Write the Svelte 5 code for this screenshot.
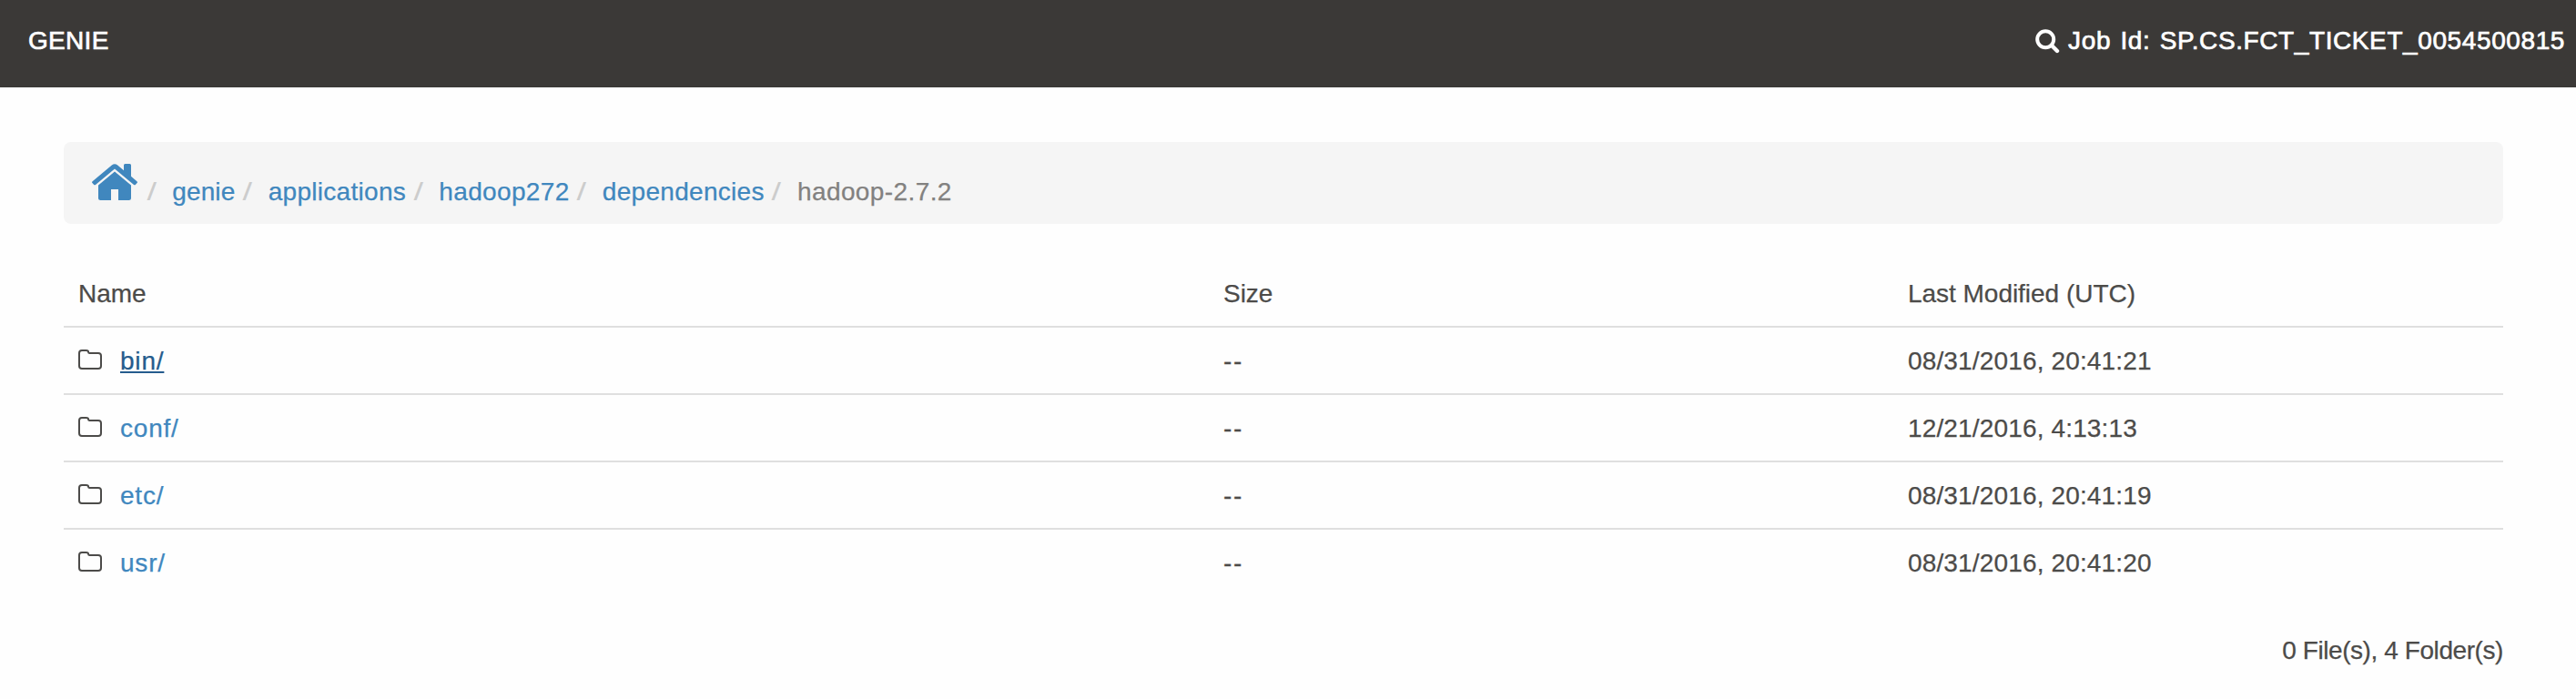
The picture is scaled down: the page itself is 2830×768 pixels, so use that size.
<script>
  const crumbs = [
    { name: 'genie', spacing: 0.15 },
    { name: 'applications', spacing: 0.3 },
    { name: 'hadoop272', spacing: 0.35 },
    { name: 'dependencies', spacing: 0.3 }
  ];
  const current = 'hadoop-2.7.2';
  const rows = [
    { name: 'bin/', modified: '08/31/2016, 20:41:21', hovered: true },
    { name: 'conf/', modified: '12/21/2016, 4:13:13' },
    { name: 'etc/', modified: '08/31/2016, 20:41:19' },
    { name: 'usr/', modified: '08/31/2016, 20:41:20' }
  ];
</script>

<header>
  <span class="brand">GENIE</span>
  <span class="job">
    <svg width="27" height="27" viewBox="0 0 27 27" aria-hidden="true">
      <circle cx="11.2" cy="11.2" r="9" fill="none" stroke="#fff" stroke-width="4" />
      <path d="M17.8 17.8L24 24" stroke="#fff" stroke-width="4.4" stroke-linecap="round" />
    </svg>
    <span class="job-id">Job Id: SP.CS.FCT_TICKET_0054500815</span>
  </span>
</header>

<main>
  <nav>
    <svg class="home" width="50" height="40" viewBox="0 0 50 40" aria-hidden="true">
      <path d="M0.6 19.2L21.8 1.5Q25 -1 28.2 1.5L35 7.2V1.5Q35 0 36.5 0H41.5Q43 0 43 1.5V13.8L49.4 19.2Q50.4 20 49.6 21L48 22.8Q47 23.8 46 22.9L25 5.5L4 22.9Q3 23.8 2 22.8L0.4 21Q-0.4 20 0.6 19.2Z" />
      <path d="M7 23.4L25 8.6L43 23.4V37.5Q43 40 40.5 40H29V28H21V40H9.5Q7 40 7 37.5Z" />
    </svg>
    {#each crumbs as crumb}
      <span class="slash">/</span>
      <a href="#top" style="letter-spacing: {crumb.spacing}px">{crumb.name}</a>
    {/each}
    <span class="slash">/</span>
    <span class="current">{current}</span>
  </nav>

  <table>
    <thead>
      <tr><th class="name">Name</th><th class="size">Size</th><th>Last Modified (UTC)</th></tr>
    </thead>
    <tbody>
      {#each rows as row}
        <tr>
          <td>
            <div class="entry">
              <svg width="26" height="22" viewBox="0 0 26 22" aria-hidden="true">
                <path d="M1 4Q1 1 4 1H8.5Q11.2 1 11.2 3.2Q11.2 4 12.4 4H22Q25 4 25 7V18Q25 21 22 21H4Q1 21 1 18Z" fill="none" stroke="#4c4b49" stroke-width="2" />
              </svg>
              <a href="#top" class:hovered={row.hovered}>{row.name}</a>
            </div>
          </td>
          <td class="dashes">--</td>
          <td>{row.modified}</td>
        </tr>
      {/each}
    </tbody>
  </table>

  <footer>0 File(s), 4 Folder(s)</footer>
</main>

<style>
  :global(body) {
    margin: 0;
    background: #fefefe;
    color: #4c4b49;
    font: 28px/40px "Liberation Sans", Arial, sans-serif;
    -webkit-text-stroke: 0.25px currentColor;
  }
  header {
    display: flex;
    justify-content: space-between;
    height: 96px;
    box-sizing: border-box;
    padding: 25px 12px 0 31px;
    background: #3b3937;
    color: #fff;
    -webkit-text-stroke: 0.7px #fff;
  }
  .brand { letter-spacing: 0.3px; }
  .job { display: flex; align-items: flex-start; gap: 9px; }
  .job svg { margin-top: 7px; }
  .job-id { letter-spacing: 0.6px; word-spacing: 2px; }
  main { padding: 60px 80px 0 70px; }
  nav {
    display: flex;
    height: 90px;
    box-sizing: border-box;
    padding: 35px 31px 0;
    background: #f5f5f5;
    border-radius: 8px;
    white-space: nowrap;
  }
  .home { margin: -11px 2px 0 0; fill: #4087be; }
  .slash {
    width: 8px;
    margin: 0 18.6px 0 9.6px;
    color: #ccc;
    -webkit-text-stroke: 0;
    transform: scaleX(1.35);
  }
  a { color: #4087be; text-decoration: none; }
  .current { color: #828180; letter-spacing: 0.4px; }
  table {
    width: 2680px;
    margin-top: 40px;
    border-collapse: separate;
    border-spacing: 0;
    table-layout: fixed;
  }
  th, td {
    height: 40px;
    padding: 17px 16px 15px;
    text-align: left;
    font-weight: 400;
  }
  th { letter-spacing: -0.03px; }
  td { border-top: 2px solid #dfdfdf; letter-spacing: 0.15px; }
  .name { width: 1226px; }
  .size { width: 720px; }
  .entry { display: flex; align-items: center; gap: 20px; letter-spacing: 0.8px; }
  .entry svg { margin-top: -4px; }
  a.hovered {
    color: #255c8d;
    text-decoration: underline;
    text-decoration-thickness: 2px;
    text-underline-offset: 2px;
  }
  td.dashes { letter-spacing: 1.7px; }
  footer { margin-top: 41px; text-align: right; letter-spacing: -0.42px; }
</style>
